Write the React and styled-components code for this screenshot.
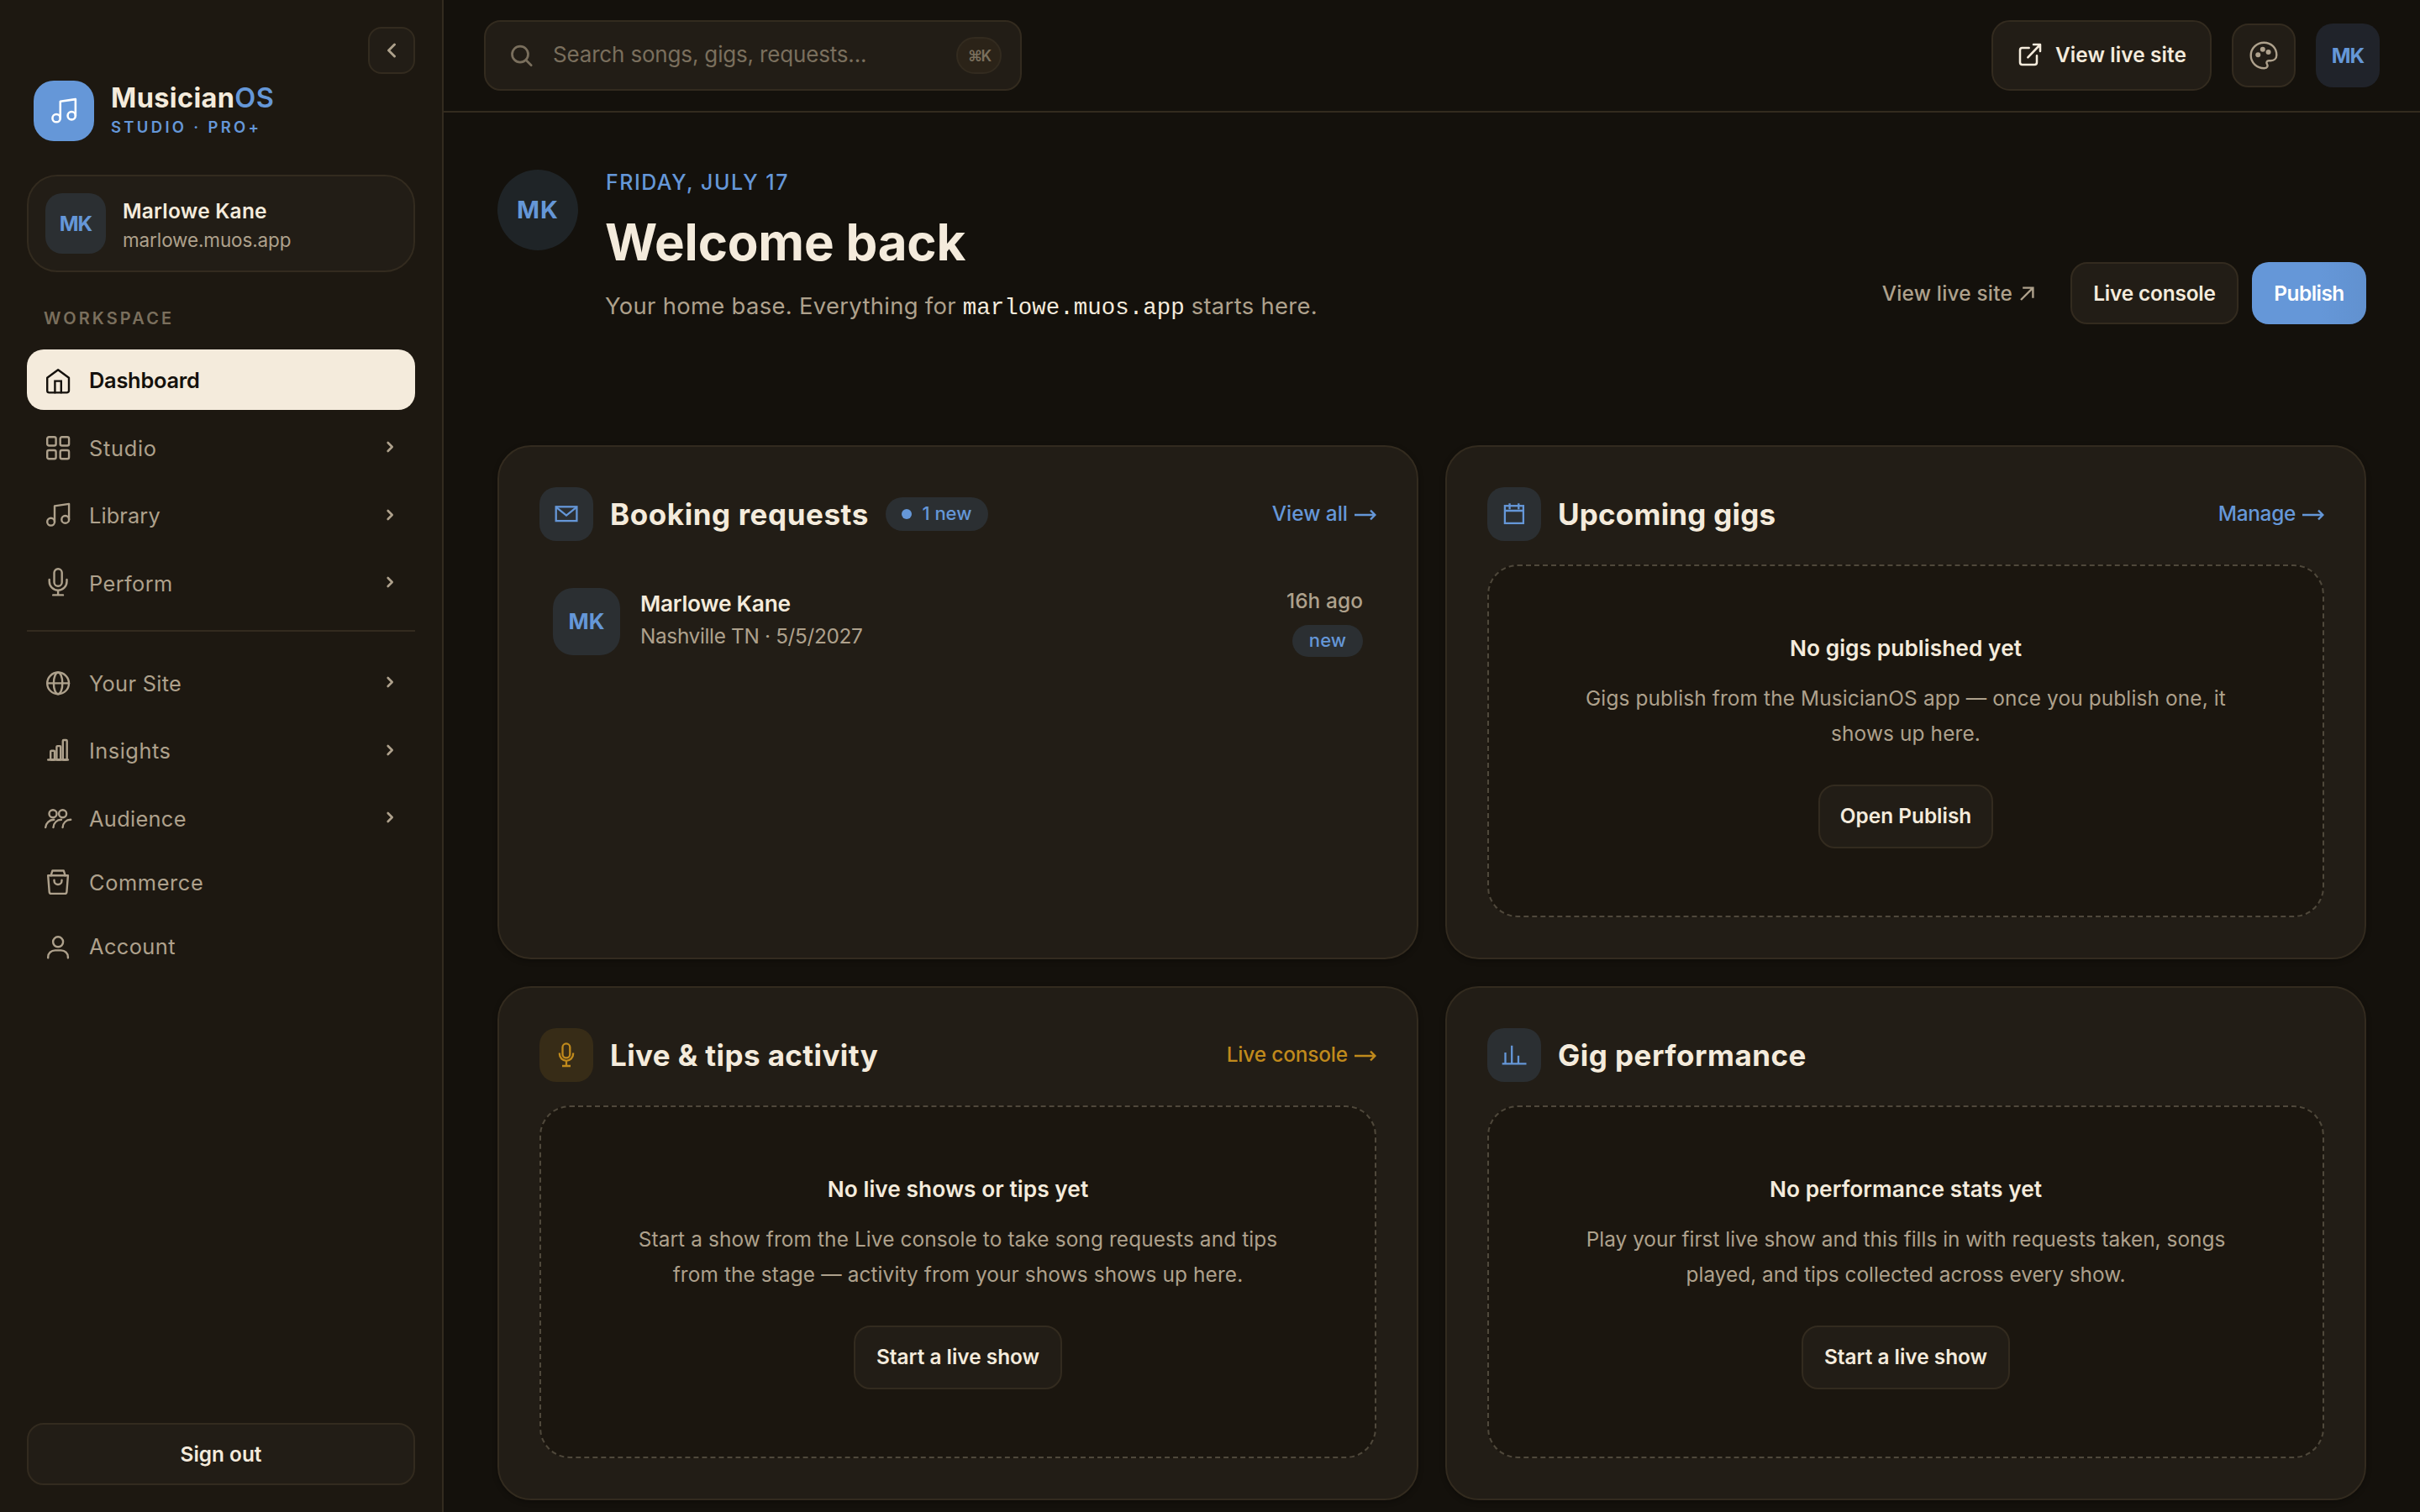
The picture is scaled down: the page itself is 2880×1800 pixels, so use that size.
import React from "react";
import styled, { createGlobalStyle } from "styled-components";

const c = {
  bg: "#14110c",
  side: "#1d1811",
  card: "#221d16",
  inset: "#1b160f",
  line: "#332b1f",
  dash: "#4f483b",
  text: "#f4ebdc",
  muted: "#aea18c",
  faint: "#7a6f5d",
  blue: "#6597d8",
  blueSoft: "#2b2f32",
  amber: "#c08a1c",
  amberSoft: "#372c17",
};

const GlobalStyle = createGlobalStyle`
  *, *::before, *::after { box-sizing: border-box; }
  body {
    margin: 0;
    background: ${c.bg};
    color: ${c.text};
    font-family: Inter, "Liberation Sans", sans-serif;
    overflow: hidden;
  }
  h1, h2, h3, p { margin: 0; }
  button { font-family: inherit; padding: 0; }
`;

const Shell = styled.div`
  display: flex;
  height: 1800px;
  overflow: hidden;
`;

/* ---------- sidebar ---------- */
const Sidebar = styled.aside`
  width: 528px;
  flex: none;
  display: flex;
  flex-direction: column;
  padding: 32px;
  background: ${c.side};
  border-right: 2px solid ${c.line};
`;

const CollapseButton = styled.button`
  align-self: flex-end;
  width: 56px;
  height: 56px;
  display: grid;
  place-items: center;
  color: ${c.muted};
  background: ${c.card};
  border: 2px solid ${c.line};
  border-radius: 16px;
`;

const Brand = styled.div`
  display: flex;
  align-items: center;
  gap: 20px;
  margin-top: 8px;
  padding-left: 8px;
`;

const BrandMark = styled.div`
  width: 72px;
  height: 72px;
  display: grid;
  place-items: center;
  color: #fff;
  background: ${c.blue};
  border-radius: 24px;
`;

const BrandText = styled.div`
  padding-bottom: 2px;
`;

const BrandName = styled.div`
  font-size: 32.5px;
  line-height: 40px;
  font-weight: 700;
  letter-spacing: 0.35px;
  span { color: ${c.blue}; font-weight: 600; }
`;

const BrandPlan = styled.div`
  font-size: 18.5px;
  line-height: 28px;
  font-weight: 600;
  letter-spacing: 3.3px;
  color: ${c.blue};
`;

const ProfileCard = styled.div`
  display: flex;
  align-items: center;
  gap: 20px;
  height: 116px;
  margin-top: 40px;
  padding: 0 20px;
  background: ${c.card};
  border: 2px solid ${c.line};
  border-radius: 36px;
`;

const Avatar = styled.div`
  width: ${(p) => p.$size}px;
  height: ${(p) => p.$size}px;
  flex: none;
  display: grid;
  place-items: center;
  padding-bottom: 1px;
  border-radius: ${(p) => p.$radius};
  background: ${(p) => p.$bg || c.blueSoft};
  color: ${c.blue};
  font-size: ${(p) => p.$font}px;
  font-weight: 700;
  letter-spacing: ${(p) => p.$track || 0}px;
`;

const ProfileText = styled.div`
  padding-top: 4px;
`;

const ProfileName = styled.div`
  font-size: 24.5px;
  line-height: 36px;
  font-weight: 600;
  letter-spacing: 0.2px;
`;

const ProfileHost = styled.div`
  font-size: 22.5px;
  line-height: 34px;
  letter-spacing: -0.12px;
  color: ${c.muted};
`;

const SectionLabel = styled.div`
  margin: 42px 0 24px;
  padding-left: 20px;
  font-size: 20px;
  line-height: 26px;
  font-weight: 600;
  letter-spacing: 3.1px;
  color: ${c.faint};
`;

const Nav = styled.nav`
  display: flex;
  flex-direction: column;
  gap: 4px;
`;

const NavItem = styled.a`
  display: flex;
  align-items: center;
  gap: 20px;
  height: 72px;
  margin-top: ${(p) => (p.$group ? "4.67px" : "0")};
  padding: 0 20px;
  border-radius: 20px;
  font-size: 25.4px;
  font-weight: ${(p) => (p.$active ? 600 : 400)};
  letter-spacing: ${(p) => p.$track}px;
  color: ${(p) => (p.$active ? c.bg : c.muted)};
  background: ${(p) => (p.$active ? c.text : "transparent")};
  svg { overflow: visible; flex: none; }
`;

const NavLabel = styled.span`
  flex: 1;
  padding-top: 1px;
`;

const NavChevron = styled.span`
  display: flex;
  margin-right: 5px;
  padding-bottom: 1px;
`;

const NavDivider = styled.hr`
  width: 100%;
  height: 2px;
  margin: 20px 0;
  border: 0;
  background: ${c.line};
`;

/* ---------- buttons and links ---------- */
const Button = styled.button`
  display: flex;
  align-items: center;
  justify-content: center;
  gap: 14px;
  width: ${(p) => (p.$width ? `${p.$width}px` : "100%")};
  height: ${(p) => p.$height || 74}px;
  padding-bottom: ${(p) => p.$lift || 0}px;
  color: ${(p) => (p.$primary ? "#fff" : c.text)};
  background: ${(p) =>
    p.$primary ? `linear-gradient(90deg, ${c.blue} 60%, #6191cf)` : c.card};
  border: 2px solid ${(p) => (p.$primary ? "transparent" : c.line)};
  border-width: ${(p) => (p.$primary ? 0 : 2)}px;
  border-radius: ${(p) => p.$radius || 20}px;
  font-size: 24.4px;
  font-weight: 600;
  letter-spacing: ${(p) => p.$track || 0}px;
  white-space: nowrap;
`;

const SignOut = styled(Button)`
  margin-top: auto;
`;

const GhostLink = styled.a`
  display: flex;
  align-items: center;
  gap: 9px;
  height: 74px;
  padding: 0 27px;
  color: ${c.muted};
  font-size: 24.4px;
  font-weight: 500;
  letter-spacing: 0.2px;
`;

/* ---------- top bar ---------- */
const Main = styled.div`
  flex: 1;
  min-width: 0;
  display: flex;
  flex-direction: column;
`;

const TopBar = styled.header`
  display: flex;
  align-items: center;
  gap: 24px;
  height: 134px;
  flex: none;
  padding: 0 48px;
  border-bottom: 2px solid ${c.line};
`;

const SearchBox = styled.div`
  display: flex;
  align-items: center;
  width: 640px;
  height: 84px;
  margin-right: auto;
  padding: 0 22px 0 28px;
  background: ${c.card};
  border: 2px solid ${c.line};
  border-radius: 20px;
  color: ${c.faint};
`;

const SearchPlaceholder = styled.span`
  flex: 1;
  margin-left: 22px;
  padding-bottom: 3px;
  font-size: 26px;
  letter-spacing: -0.17px;
`;

const Shortcut = styled.kbd`
  display: grid;
  place-items: center;
  width: 54px;
  height: 44px;
  background: #2b2318;
  border: 2px solid ${c.line};
  border-radius: 22px;
  font-family: Inter, "DejaVu Sans", sans-serif;
  font-size: 18px;
  font-weight: 600;
  letter-spacing: -2px;
`;

const IconButton = styled.button`
  width: 76px;
  height: 76px;
  display: grid;
  place-items: center;
  color: ${c.muted};
  background: ${c.card};
  border: 2px solid ${c.line};
  border-radius: 20px;
`;

/* ---------- hero ---------- */
const Content = styled.main`
  padding: 68px 64px 0;
`;

const Hero = styled.section`
  display: flex;
  align-items: flex-start;
  gap: 32px;
  height: 184px;
  margin-bottom: 144px;
`;

const HeroText = styled.div`
  flex: 1;
`;

const HeroDate = styled.div`
  padding-left: 1px;
  font-size: 25px;
  line-height: 30px;
  font-weight: 500;
  letter-spacing: 1.5px;
  color: ${c.blue};
`;

const HeroTitle = styled.h1`
  margin-top: 23px;
  font-size: 60px;
  line-height: 66px;
  font-weight: 700;
  letter-spacing: -0.2px;
`;

const HeroLead = styled.p`
  margin-top: 21px;
  font-size: 27.4px;
  line-height: 44px;
  letter-spacing: 0.32px;
  color: ${c.muted};
  white-space: nowrap;
`;

const Host = styled.code`
  font-family: "Liberation Mono", monospace;
  font-size: 27.4px;
  line-height: 1;
  letter-spacing: 0.05px;
  color: ${c.text};
`;

const HeroActions = styled.div`
  display: flex;
  gap: 16px;
  align-self: flex-end;
`;

/* ---------- cards ---------- */
const CardGrid = styled.section`
  display: grid;
  grid-template-columns: 1fr 1fr;
  gap: 32px;
`;

const Card = styled.article`
  height: 612px;
  padding: 48px;
  background: ${c.card};
  border: 2px solid ${c.line};
  border-radius: 40px;
  box-shadow: 0 2px 6px rgba(0, 0, 0, 0.3);
`;

const CardHeader = styled.header`
  display: flex;
  align-items: center;
  gap: 20px;
  height: 64px;
  margin-bottom: 28px;
`;

const CardIcon = styled.div`
  width: 64px;
  height: 64px;
  border-radius: 20px;
  color: ${(p) => (p.$amber ? c.amber : c.blue)};
  background: ${(p) => (p.$amber ? c.amberSoft : c.blueSoft)};
`;

const CardTitle = styled.h2`
  font-size: 35px;
  line-height: 44px;
  font-weight: 700;
  letter-spacing: ${(p) => p.$track}px;
  white-space: nowrap;
`;

const CardLink = styled.a`
  display: flex;
  align-items: center;
  gap: 8px;
  margin-left: auto;
  padding-bottom: 2px;
  color: ${(p) => (p.$amber ? c.amber : c.blue)};
  font-size: 24.4px;
  font-weight: 500;
  letter-spacing: ${(p) => p.$track || 0}px;
  svg { position: relative; top: 2px; }
`;

const Badge = styled.span`
  display: flex;
  align-items: center;
  justify-content: center;
  gap: 12px;
  width: ${(p) => p.$width}px;
  height: ${(p) => p.$height}px;
  padding-bottom: 2px;
  border-radius: 20px;
  background: ${c.blueSoft};
  color: ${c.blue};
  font-size: 22px;
  font-weight: 500;
`;

const Dot = styled.i`
  width: 12px;
  height: 12px;
  margin-top: 2px;
  border-radius: 50%;
  background: ${c.blue};
`;

const RequestRow = styled.div`
  display: flex;
  align-items: flex-start;
  gap: 24px;
  height: 80px;
  margin: 56px 16px 0;
`;

const RequestText = styled.div`
  flex: 1;
  line-height: 38px;
`;

const RequestName = styled.div`
  font-size: 26.3px;
  font-weight: 600;
  letter-spacing: -0.25px;
`;

const RequestMeta = styled.div`
  font-size: 24.4px;
  letter-spacing: -0.35px;
  color: ${c.muted};
`;

const RequestAside = styled.div`
  display: flex;
  flex-direction: column;
  align-items: flex-end;
  gap: 12px;
  margin-top: -2px;
  font-size: 24.4px;
  line-height: 34px;
  font-weight: 500;
  letter-spacing: 0.1px;
  color: ${c.muted};
`;

const EmptyState = styled.div`
  display: flex;
  flex-direction: column;
  align-items: center;
  justify-content: center;
  height: 420px;
  border: 2px dashed ${c.dash};
  border-radius: 36px;
  background: ${c.inset};
  text-align: center;
`;

const EmptyTitle = styled.h3`
  font-size: 26.3px;
  line-height: 36px;
  font-weight: 600;
  letter-spacing: 0.05px;
`;

const EmptyText = styled.p`
  margin: 20px 0 40px;
  font-size: 24.4px;
  line-height: 42px;
  letter-spacing: ${(p) => p.$track || 0}px;
  color: ${c.muted};
  white-space: nowrap;
`;

/* ---------- icons ---------- */
const NavSvg = ({ children, size = 34 }) => (
  <svg width={size} height={size} viewBox="0 0 34 34" fill="none" stroke="currentColor" strokeWidth="2.4" strokeLinecap="round" strokeLinejoin="round">
    {children}
  </svg>
);

const CardSvg = ({ children }) => (
  <svg width="64" height="64" viewBox="0 0 64 64" fill="none" stroke="currentColor" strokeWidth="2.3">
    {children}
  </svg>
);

const HomeIcon = () => (
  <NavSvg>
    <path d="M4.2 14.8 17.1 5.3 30 14.8V30a2.4 2.4 0 0 1-2.4 2.4H6.6A2.4 2.4 0 0 1 4.2 30Z" />
    <path d="M13.4 32.2V18.6h7.4v13.6" strokeLinejoin="miter" />
  </NavSvg>
);
const GridIcon = () => (
  <NavSvg>
    <rect x="4.2" y="4.3" width="10.4" height="10.2" rx="2" />
    <rect x="19.7" y="4.3" width="10.4" height="10.2" rx="2" />
    <rect x="4.2" y="20" width="10.4" height="10.2" rx="2" />
    <rect x="19.7" y="20" width="10.4" height="10.2" rx="2" />
  </NavSvg>
);
const MusicIcon = ({ size }) => (
  <NavSvg size={size}>
    <circle cx="8.6" cy="25.2" r="4.4" />
    <circle cx="25.7" cy="22.4" r="4.4" />
    <path d="M13 25.2V6.4L30.1 3.9v18.5" />
  </NavSvg>
);
const MicIcon = () => (
  <NavSvg>
    <rect x="12.5" y="0.2" width="9.2" height="20.6" rx="4.6" />
    <path d="M6.7 13v2.2a10.4 10.4 0 0 0 20.8 0V13M17.1 25.6v5.8M11.2 31.4h11.8" />
  </NavSvg>
);
const GlobeIcon = () => (
  <NavSvg>
    <circle cx="17.1" cy="17.4" r="12.9" />
    <ellipse cx="17.1" cy="17.4" rx="5.2" ry="12.9" />
    <path d="M4.2 17.4H30" />
  </NavSvg>
);
const InsightsIcon = () => (
  <NavSvg>
    <rect x="8.2" y="17.8" width="4.8" height="10.7" rx="1" />
    <rect x="15.4" y="12.1" width="4.8" height="16.4" rx="1" />
    <rect x="22.8" y="5" width="4.9" height="23.5" rx="1" />
    <path d="M5.2 28.5h23.7" />
  </NavSvg>
);
const AudienceIcon = () => (
  <NavSvg>
    <circle cx="11" cy="11.8" r="4.5" />
    <circle cx="22.6" cy="11.8" r="4.5" />
    <path d="M2.2 28c.4-5.2 4.3-9 10-9.2M11.5 28c.4-5.2 4-9 9.5-9.2M22.6 28c.3-5.2 4-9 9.6-9.2" />
  </NavSvg>
);
const CommerceIcon = () => (
  <NavSvg>
    <path d="M5.2 9.3h23.7l-1.5 19.4a2.3 2.3 0 0 1-2.3 2.2H9a2.3 2.3 0 0 1-2.3-2.2Z" />
    <path d="M8.6 9.3 10.4 3.5h13.4l1.8 5.8M12.5 14.6v.9a4.5 4.5 0 0 0 9 0v-.9" />
  </NavSvg>
);
const AccountIcon = () => (
  <NavSvg>
    <circle cx="17.1" cy="12.3" r="6" />
    <path d="M5.2 31.2v-.8c0-4.6 3.7-8 8.3-8h7.2c4.6 0 8.2 3.4 8.2 8v.8" />
  </NavSvg>
);
const ChevronRight = () => (
  <svg width="9" height="14" viewBox="0 0 9 14" fill="none" stroke="currentColor" strokeWidth="2.6" strokeLinecap="round" strokeLinejoin="round">
    <path d="m1.7 2 5 5-5 5" />
  </svg>
);
const ChevronLeft = () => (
  <svg width="12" height="18" viewBox="0 0 12 18" fill="none" stroke="currentColor" strokeWidth="2.9" strokeLinecap="round" strokeLinejoin="round">
    <path d="M9.5 2 2.5 9l7 7" />
  </svg>
);
const SearchIcon = () => (
  <svg width="30" height="30" viewBox="0 0 30 30" fill="none" stroke="currentColor" strokeWidth="2.7" strokeLinecap="round">
    <circle cx="13" cy="13.6" r="9.5" />
    <path d="m20.2 20.8 6 6" />
  </svg>
);
const ExternalIcon = () => (
  <svg width="32" height="32" viewBox="0 0 24 24" fill="none" stroke="currentColor" strokeWidth="1.9" strokeLinecap="round" strokeLinejoin="round">
    <path d="M15 3h6v6M10 14.5 21 3M18 13v6a2 2 0 0 1-2 2H5a2 2 0 0 1-2-2V8a2 2 0 0 1 2-2h6" />
  </svg>
);
const PaletteIcon = () => (
  <svg width="36" height="36" viewBox="0 0 24 24" fill="none" stroke="currentColor" strokeWidth="1.6" strokeLinejoin="round">
    <path d="M12.4 22.2C6.5 22.2 1.8 17.7 1.8 12S6.5 1.8 12.2 1.8 22.2 6 22.2 11.6c0 2.9-2 4.6-4.6 4.6h-1.6c-1.5 0-2.2 1.3-1.4 2.6.9 1.4.5 3.4-2.2 3.4Z" />
    <g fill="currentColor" stroke="none">
      <circle cx="7.5" cy="11.5" r="2" />
      <circle cx="11.2" cy="7.2" r="2" />
      <circle cx="15.7" cy="9.3" r="2" />
    </g>
  </svg>
);
const ArrowRight = () => (
  <svg width="26" height="14" viewBox="0 0 26 14" fill="none" stroke="currentColor" strokeWidth="2.3">
    <path d="M0 7h24.500M19 1.6 24.400 7 19 12.400" />
  </svg>
);
const ArrowUpRight = () => (
  <svg width="17" height="17" viewBox="0 0 17 17" fill="none" stroke="currentColor" strokeWidth="2.4">
    <path d="M1 16 15.4 1.6M3.2 1.6h12.2v12.2" />
  </svg>
);

const MailIcon = () => (
  <CardSvg>
    <rect x="19.7" y="23.3" width="24.7" height="16.8" />
    <path d="m19.7 23.6 12.3 10 12.4-10" />
  </CardSvg>
);
const CalendarIcon = () => (
  <CardSvg>
    <rect x="20.9" y="22.2" width="22" height="20.7" />
    <path d="M20.9 28h22M26.6 19.2v7M37.3 19.2v7" />
  </CardSvg>
);
const CardMicIcon = () => (
  <CardSvg>
    <rect x="27.5" y="18.4" width="8.8" height="17" rx="4.4" />
    <path d="M23.9 29.5v1.2a8.1 8.1 0 0 0 16.2 0v-1.2M32 38.8V45M27 45h10" />
  </CardSvg>
);
const ChartIcon = () => (
  <CardSvg>
    <path d="M17.7 42.4h28.8M21.5 42V29M29.2 42V20.8M37 42v-9.2" />
  </CardSvg>
);

/* ---------- data ---------- */
const workspace = [
  { label: "Dashboard", Icon: HomeIcon, active: true, track: -0.25 },
  { label: "Studio", Icon: GridIcon, group: true, track: 0.7 },
  { label: "Library", Icon: MusicIcon, group: true, track: 0.1 },
  { label: "Perform", Icon: MicIcon, group: true, track: 0.4 },
];
const business = [
  { label: "Your Site", Icon: GlobeIcon, group: true, track: 0.3 },
  { label: "Insights", Icon: InsightsIcon, group: true, track: 0.5 },
  { label: "Audience", Icon: AudienceIcon, group: true, track: 0.3 },
  { label: "Commerce", Icon: CommerceIcon, track: 0.6 },
  { label: "Account", Icon: AccountIcon, track: 0.4 },
];

const NavList = ({ items }) => (
  <Nav>
    {items.map(({ label, Icon, active, group, track }) => (
      <NavItem key={label} $active={active} $group={group} $track={track}>
        <Icon />
        <NavLabel>{label}</NavLabel>
        {group && (
          <NavChevron>
            <ChevronRight />
          </NavChevron>
        )}
      </NavItem>
    ))}
  </Nav>
);

const Empty = ({ title, lines, track, action, width }) => (
  <EmptyState>
    <EmptyTitle>{title}</EmptyTitle>
    <EmptyText $track={track}>
      {lines[0]}
      <br />
      {lines[1]}
    </EmptyText>
    <Button $width={width} $height={76} $lift={2}>
      {action}
    </Button>
  </EmptyState>
);

export default function App() {
  return (
    <>
      <GlobalStyle />
      <Shell>
        <Sidebar>
          <CollapseButton>
            <ChevronLeft />
          </CollapseButton>
          <Brand>
            <BrandMark>
              <MusicIcon size={36} />
            </BrandMark>
            <BrandText>
              <BrandName>
                Musician<span>OS</span>
              </BrandName>
              <BrandPlan>STUDIO · PRO+</BrandPlan>
            </BrandText>
          </Brand>
          <ProfileCard>
            <Avatar $size={72} $radius="20px" $font={24.5} $track={-1}>MK</Avatar>
            <ProfileText>
              <ProfileName>Marlowe Kane</ProfileName>
              <ProfileHost>marlowe.muos.app</ProfileHost>
            </ProfileText>
          </ProfileCard>
          <SectionLabel>WORKSPACE</SectionLabel>
          <NavList items={workspace} />
          <NavDivider />
          <NavList items={business} />
          <SignOut>Sign out</SignOut>
        </Sidebar>

        <Main>
          <TopBar>
            <SearchBox>
              <SearchIcon />
              <SearchPlaceholder>Search songs, gigs, requests...</SearchPlaceholder>
              <Shortcut>⌘K</Shortcut>
            </SearchBox>
            <Button $width={262} $height={84} $radius={22} $track={0.1} $lift={2}>
              <ExternalIcon />
              View live site
            </Button>
            <IconButton>
              <PaletteIcon />
            </IconButton>
            <Avatar $size={76} $radius="20px" $font={24.5} $track={-1} $bg="#20232a">MK</Avatar>
          </TopBar>

          <Content>
            <Hero>
              <Avatar $size={96} $radius="50%" $font={29} $track={1} $bg="#1f2427">MK</Avatar>
              <HeroText>
                <HeroDate>FRIDAY, JULY 17</HeroDate>
                <HeroTitle>Welcome back</HeroTitle>
                <HeroLead>
                  Your home base. Everything for <Host>marlowe.muos.app</Host> starts here.
                </HeroLead>
              </HeroText>
              <HeroActions>
                <GhostLink>
                  View live site
                  <ArrowUpRight />
                </GhostLink>
                <Button $width={200} $track={-0.17}>Live console</Button>
                <Button $width={136} $track={-0.5} $primary>Publish</Button>
              </HeroActions>
            </Hero>

            <CardGrid>
              <Card>
                <CardHeader>
                  <CardIcon><MailIcon /></CardIcon>
                  <CardTitle $track={0.57}>Booking requests</CardTitle>
                  <Badge $width={122} $height={40}>
                    <Dot />1 new
                  </Badge>
                  <CardLink>
                    View all
                    <ArrowRight />
                  </CardLink>
                </CardHeader>
                <RequestRow>
                  <Avatar $size={80} $radius="24px" $font={26}>MK</Avatar>
                  <RequestText>
                    <RequestName>Marlowe Kane</RequestName>
                    <RequestMeta>Nashville TN · 5/5/2027</RequestMeta>
                  </RequestText>
                  <RequestAside>
                    16h ago
                    <Badge $width={84} $height={38}>new</Badge>
                  </RequestAside>
                </RequestRow>
              </Card>

              <Card>
                <CardHeader>
                  <CardIcon><CalendarIcon /></CardIcon>
                  <CardTitle $track={0.2}>Upcoming gigs</CardTitle>
                  <CardLink $track={-0.3}>
                    Manage
                    <ArrowRight />
                  </CardLink>
                </CardHeader>
                <Empty
                  title="No gigs published yet"
                  lines={["Gigs publish from the MusicianOS app — once you publish one, it", "shows up here."]}
                  track={0.13}
                  action="Open Publish"
                  width={208}
                />
              </Card>

              <Card>
                <CardHeader>
                  <CardIcon $amber><CardMicIcon /></CardIcon>
                  <CardTitle $track={0.4}>Live &amp; tips activity</CardTitle>
                  <CardLink $amber $track={-0.15}>
                    Live console
                    <ArrowRight />
                  </CardLink>
                </CardHeader>
                <Empty
                  title="No live shows or tips yet"
                  lines={["Start a show from the Live console to take song requests and tips", "from the stage — activity from your shows shows up here."]}
                  track={0.11}
                  action="Start a live show"
                  width={248}
                />
              </Card>

              <Card>
                <CardHeader>
                  <CardIcon><ChartIcon /></CardIcon>
                  <CardTitle $track={0.48}>Gig performance</CardTitle>
                </CardHeader>
                <Empty
                  title="No performance stats yet"
                  lines={["Play your first live show and this fills in with requests taken, songs", "played, and tips collected across every show."]}
                  action="Start a live show"
                  width={248}
                />
              </Card>
            </CardGrid>
          </Content>
        </Main>
      </Shell>
    </>
  );
}
